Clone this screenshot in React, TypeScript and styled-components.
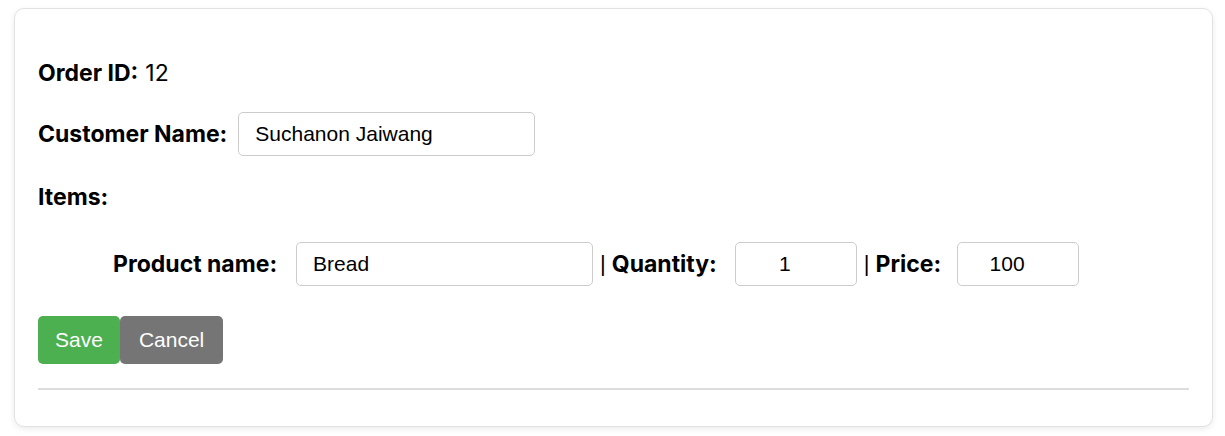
import React from "react";
import styled, { createGlobalStyle } from "styled-components";

const Global = createGlobalStyle`
  html, body { margin: 0; padding: 0; background: #fff; }
  body { font-family: Inter, "Noto Sans", sans-serif; color: #000; }
`;

const Page = styled.div`
  padding: 8px 12px 10px 14px;
`;

const Card = styled.div`
  border: 1px solid #e2e2e2;
  border-radius: 10px;
  box-shadow: 0 2px 6px rgba(0, 0, 0, 0.08);
  padding: 42px 23px 36px 23px;
  background: #fff;
`;

const Row = styled.div<{ $indent?: number; $gap?: number }>`
  display: flex;
  align-items: center;
  height: 44px;
  margin-bottom: ${(p) => p.$gap ?? 0}px;
  padding-left: ${(p) => p.$indent ?? 0}px;
`;

const Label = styled.span<{ $space?: number }>`
  font-weight: 700;
  font-size: 23px;
  line-height: 1;
  margin-right: ${(p) => p.$space ?? 10}px;
  white-space: nowrap;
`;

const Value = styled.span`
  font-size: 23px;
  line-height: 1;
  font-weight: 400;
`;

const Sep = styled.span`
  font-family: "Liberation Sans", Arial, sans-serif;
  font-size: 22px;
  line-height: 1;
  margin: 0 6px 0 7px;
`;

const Input = styled.input<{ $w: number; $center?: boolean }>`
  width: ${(p) => p.$w}px;
  height: 44px;
  box-sizing: border-box;
  border: 1px solid #ccc;
  border-radius: 5px;
  padding: ${(p) => (p.$center ? "0 38px 0 16px" : "0 16px")};
  font-family: "Liberation Sans", Arial, sans-serif;
  font-size: 21px;
  color: #000;
  background: #fff;
  text-align: ${(p) => (p.$center ? "center" : "left")};
  outline: none;
`;

const Buttons = styled.div`
  display: flex;
`;

const Button = styled.button<{ $bg: string; $px: number }>`
  background: ${(p) => p.$bg};
  color: #fff;
  border: none;
  border-radius: 5px;
  height: 48px;
  padding: 0 ${(p) => p.$px}px;
  font-family: "Liberation Sans", Arial, sans-serif;
  font-size: 21px;
  cursor: pointer;
`;

const Rule = styled.hr`
  border: none;
  border-top: 2px solid #ddd;
  margin: 24px 0 0 0;
`;

export default function App() {
  return (
    <>
      <Global />
      <Page>
        <Card>
          <Row $gap={17}>
            <Label $space={7}>Order ID:</Label>
            <Value>12</Value>
          </Row>
          <Row $gap={19}>
            <Label $space={11}>Customer Name:</Label>
            <Input $w={297} defaultValue="Suchanon Jaiwang" />
          </Row>
          <Row $gap={23}>
            <Label>Items:</Label>
          </Row>
          <Row $indent={75} $gap={30}>
            <Label $space={19}>Product name:</Label>
            <Input $w={297} defaultValue="Bread" />
            <Sep>|</Sep>
            <Label $space={18}>Quantity:</Label>
            <Input $w={122} $center defaultValue="1" />
            <Sep>|</Sep>
            <Label $space={16}>Price:</Label>
            <Input $w={122} $center defaultValue="100" />
          </Row>
          <Buttons>
            <Button $bg="#4caf50" $px={17}>Save</Button>
            <Button $bg="#757575" $px={19}>Cancel</Button>
          </Buttons>
          <Rule />
        </Card>
      </Page>
    </>
  );
}
